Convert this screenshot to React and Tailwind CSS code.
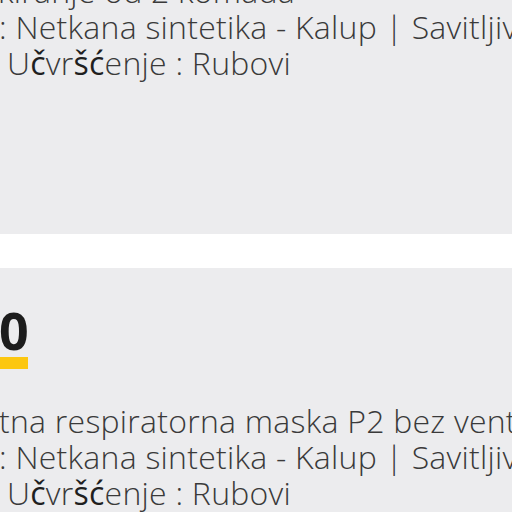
import React from 'react';

const Special = ({ children }) => (
  <span className="font-normal text-[#1f1f1f]">{children}</span>
);

const SpecLines = ({ first, firstIndent }) => (
  <div className="text-[32px] leading-[36px] tracking-[0.25px] font-light text-[#3a3a3a] whitespace-nowrap">
    <div className={firstIndent}>{first}</div>
    <div className="-ml-[1px]">: Netkana sintetika - Kalup | Savitljiva traka za nos</div>
    <div className="ml-[7px]">
      U<Special>č</Special>vr<Special>šć</Special>enje : Rubovi
    </div>
  </div>
);

export default function App() {
  return (
    <div className="w-[512px] h-[512px] overflow-hidden bg-white" style={{ fontFamily: '"Open Sans", "Liberation Sans", sans-serif' }}>
      {/* Previous product card (cut at the top) */}
      <section className="h-[234px] bg-[#ececee] overflow-hidden">
        <div className="-mt-[27px]">
          <SpecLines first="kiranje od 2 komada" firstIndent="-ml-[2px]" />
        </div>
      </section>

      {/* Gap between cards */}
      <div className="h-[34px] bg-white" />

      {/* Next product card */}
      <section className="h-[244px] bg-[#ececee] overflow-hidden">
        <div className="pt-[36px]">
          <div className="w-[28px] border-b-[12px] border-[#fcc710] pb-[1px]">
            <div className="-ml-[1px] text-[52px] leading-[52px] font-bold text-[#1c1c1c]">0</div>
          </div>
        </div>
        <div className="mt-[34px]">
          <SpecLines first="tna respiratorna maska P2 bez ventila" firstIndent="-ml-[1px]" />
        </div>
      </section>
    </div>
  );
}
